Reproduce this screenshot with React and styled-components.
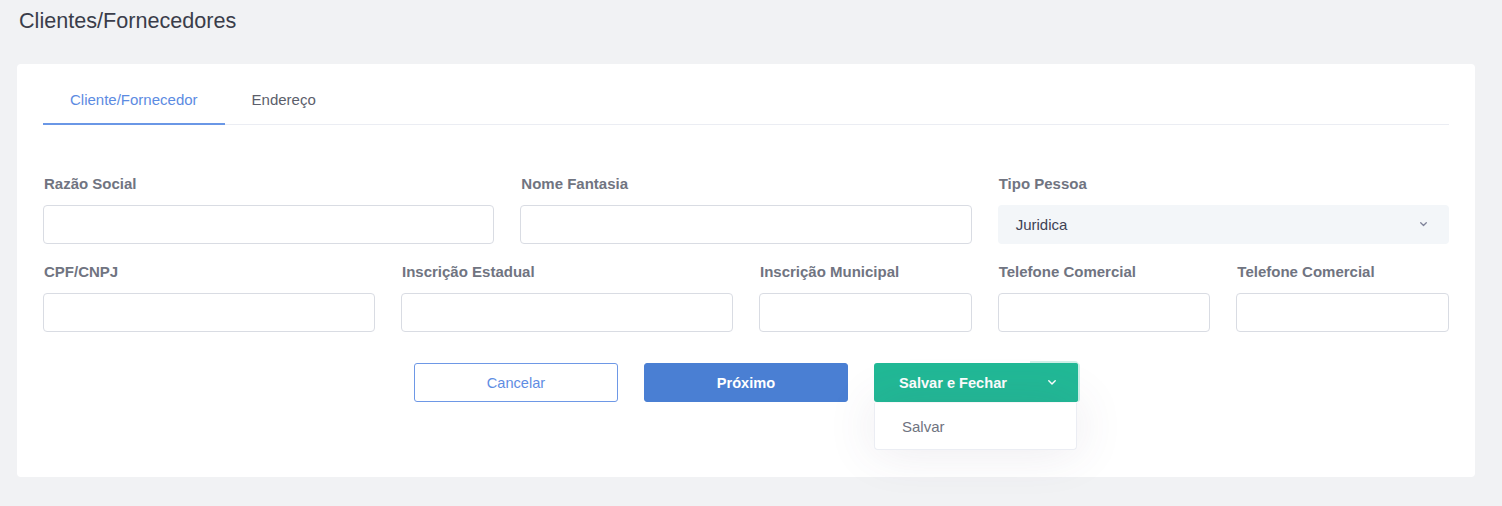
import React from "react";
import styled, { createGlobalStyle } from "styled-components";

const Global = createGlobalStyle`
  * { box-sizing: border-box; }
  html, body { margin: 0; padding: 0; }
  body {
    background: #f1f2f4;
    font-family: "Liberation Sans", Arial, sans-serif;
    color: #3f4254;
  }
`;

const Page = styled.div`
  padding: 9px 27px 29px 17px;
  min-height: 506px;
`;

const Title = styled.h1`
  margin: 0 0 0 2px;
  font-size: 21.6px;
  font-weight: 400;
  line-height: 24px;
  color: #3a3d4a;
  height: 55px;
`;

const Card = styled.div`
  background: #fff;
  border-radius: 4px;
  padding: 26px 26px 75px;
`;

const Tabs = styled.div`
  display: flex;
  border-bottom: 1px solid #ebedf3;
`;

const Tab = styled.div`
  padding: 0 27px 13px;
  font-size: 15px;
  line-height: 20px;
  margin-bottom: -1px;
  color: ${(p) => (p.$active ? "#5c8be2" : "#5b5e6b")};
  border-bottom: 2px solid ${(p) => (p.$active ? "#6a97e6" : "transparent")};
`;

const Form = styled.div`
  display: grid;
  grid-template-columns: repeat(12, 1fr);
  column-gap: 26px;
  row-gap: 20px;
  padding-top: 51px;
`;

const Group = styled.div`
  grid-column: span ${(p) => p.$span};
  display: flex;
  flex-direction: column;
`;

const Label = styled.label`
  font-size: 15px;
  line-height: 16px;
  font-weight: 700;
  color: #707481;
  margin: 0 0 13px 1px;
`;

const Input = styled.div`
  height: 39px;
  border: 1px solid #d9dce3;
  border-radius: 4px;
  background: #fff;
`;

const Select = styled.div`
  height: 39px;
  border-radius: 4px;
  background: #f3f6f9;
  display: flex;
  align-items: center;
  justify-content: space-between;
  padding: 0 22px 0 18px;
  font-size: 15px;
  color: #3f4254;
`;

const Actions = styled.div`
  display: flex;
  justify-content: center;
  gap: 26px;
  padding-top: 31px;
`;

const Button = styled.button`
  width: 204px;
  height: 39px;
  border-radius: 3px;
  font-family: inherit;
  font-size: 14.6px;
  border: 1px solid ${(p) => (p.$variant === "outline" ? "#6e98e6" : "#4a7fd3")};
  background: ${(p) => (p.$variant === "outline" ? "#fff" : "#4a7fd3")};
  color: ${(p) => (p.$variant === "outline" ? "#5f8de3" : "#fff")};
  font-weight: ${(p) => (p.$variant === "outline" ? 400 : 700)};
  padding: 0;
`;

const SplitWrap = styled.div`
  position: relative;
  width: 204px;
  height: 39px;
`;

const Split = styled.div`
  display: flex;
  height: 39px;
  border-radius: 3px;
  background: #21b996;
`;

const SplitMain = styled.button`
  flex: 1;
  border: none;
  background: transparent;
  color: #fff;
  font-family: inherit;
  font-size: 14.6px;
  font-weight: 700;
  padding: 0 0 0 2px;
`;

const SplitToggle = styled.button`
  width: 48px;
  border: none;
  background: #21b996;
  border-radius: 0 3px 3px 0;
  display: flex;
  align-items: center;
  justify-content: center;
  padding: 0 4px 0 0;
  box-shadow: 0 -2px 0 0 rgba(33, 185, 150, 0.22), 2px 0 0 0 rgba(33, 185, 150, 0.22);
`;

const Menu = styled.div`
  position: absolute;
  top: 40px;
  left: 0;
  width: 203px;
  height: 47px;
  background: #fff;
  border: 1px solid #ebedf3;
  border-top: none;
  border-radius: 0 0 4px 4px;
  box-shadow: 0 0 50px 0 rgba(82, 63, 105, 0.12);
  display: flex;
  align-items: center;
  padding-left: 27px;
  font-size: 15px;
  color: #6f7380;
`;

const Chevron = ({ color = "#fff", size = 8 }) => (
  <svg width={size} height={size * 0.6} viewBox="0 0 10 6" fill="none">
    <path d="M1 1l4 4 4-4" stroke={color} strokeWidth="1.8" strokeLinecap="round" strokeLinejoin="round" />
  </svg>
);

export default function App() {
  return (
    <>
      <Global />
      <Page>
        <Title>Clientes/Fornecedores</Title>
        <Card>
          <Tabs>
            <Tab $active>Cliente/Fornecedor</Tab>
            <Tab>Endereço</Tab>
          </Tabs>
          <Form>
            <Group $span={4}>
              <Label>Razão Social</Label>
              <Input />
            </Group>
            <Group $span={4}>
              <Label>Nome Fantasia</Label>
              <Input />
            </Group>
            <Group $span={4}>
              <Label>Tipo Pessoa</Label>
              <Select>
                <span>Juridica</span>
                <Chevron color="#7e8299" size={7} />
              </Select>
            </Group>
            <Group $span={3}>
              <Label>CPF/CNPJ</Label>
              <Input />
            </Group>
            <Group $span={3}>
              <Label>Inscrição Estadual</Label>
              <Input />
            </Group>
            <Group $span={2}>
              <Label>Inscrição Municipal</Label>
              <Input />
            </Group>
            <Group $span={2}>
              <Label>Telefone Comercial</Label>
              <Input />
            </Group>
            <Group $span={2}>
              <Label>Telefone Comercial</Label>
              <Input />
            </Group>
          </Form>
          <Actions>
            <Button $variant="outline">Cancelar</Button>
            <Button>Próximo</Button>
            <SplitWrap>
              <Split>
                <SplitMain>Salvar e Fechar</SplitMain>
                <SplitToggle>
                  <Chevron />
                </SplitToggle>
              </Split>
              <Menu>Salvar</Menu>
            </SplitWrap>
          </Actions>
        </Card>
      </Page>
    </>
  );
}
